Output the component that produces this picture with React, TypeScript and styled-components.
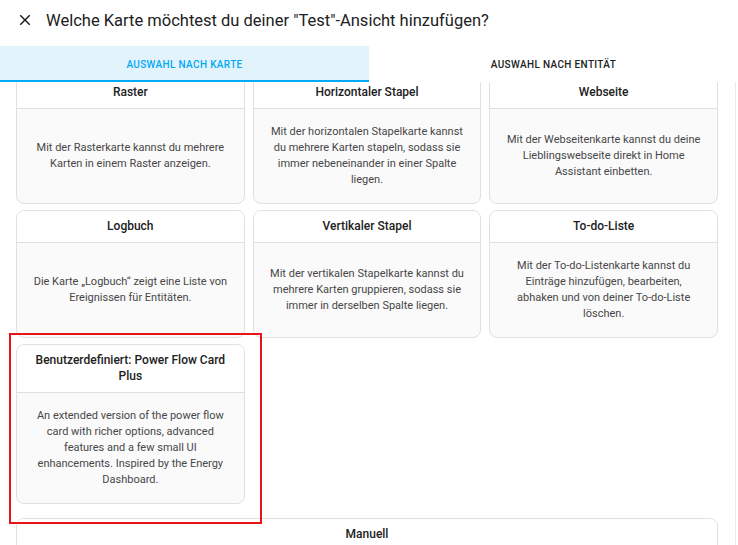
import React from 'react'
import styled, { createGlobalStyle } from 'styled-components'

const GlobalStyle = createGlobalStyle`
  html, body {
    margin: 0;
    padding: 0;
    background: #ffffff;
    font-family: Roboto, 'Noto Sans', sans-serif;
  }
  * {
    box-sizing: border-box;
  }
`

const Dialog = styled.div`
  position: relative;
  width: 738px;
  height: 545px;
  display: flex;
  flex-direction: column;
  overflow: hidden;
  background: #ffffff;
`

const Header = styled.div`
  height: 46px;
  display: flex;
  align-items: center;
  padding: 0 0 6px 16px;
  gap: 12px;
  flex-shrink: 0;
`

const CloseButton = styled.button`
  width: 18px;
  height: 18px;
  padding: 0;
  border: none;
  background: none;
  display: flex;
  align-items: center;
  justify-content: center;
  color: #212121;
`

const Title = styled.h2`
  margin: 0;
  font-size: 16.5px;
  font-weight: 400;
  color: #212121;
`

const Tabs = styled.div`
  display: flex;
  height: 36px;
  flex-shrink: 0;
  position: relative;
  z-index: 1;
  background: #ffffff;
`

const Tab = styled.div<{ $active?: boolean }>`
  flex: 1;
  display: flex;
  align-items: center;
  justify-content: center;
  padding-top: 2px;
  font-size: 10px;
  font-weight: 500;
  letter-spacing: 0.35px;
  text-transform: uppercase;
  color: ${p => (p.$active ? '#03a9f4' : '#212121')};
  background: ${p => (p.$active ? '#e2f3fc' : 'transparent')};
  border-bottom: 2px solid ${p => (p.$active ? '#03a9f4' : 'transparent')};
`

const Body = styled.div`
  flex: 1;
  display: flex;
  min-height: 0;
`

const Scroll = styled.div`
  flex: 1;
  overflow: hidden;
  padding: 0 17px 0 16px;
`

const Gutter = styled.div`
  width: 3px;
  border-left: 1px solid #ebebeb;
`

const Grid = styled.div`
  margin-top: -6px;
  display: grid;
  grid-template-columns: repeat(3, 1fr);
  gap: 6px 8px;
  align-items: stretch;
`

const Card = styled.div`
  display: flex;
  flex-direction: column;
  border: 1px solid #e0e0e0;
  border-radius: 8px;
  overflow: hidden;
  background: #fafafa;
`

const CardTitle = styled.div`
  padding: 7px 16px 8px;
  line-height: 16px;
  font-size: 12px;
  font-weight: 500;
  color: #212121;
  text-align: center;
  background: #ffffff;
  border-bottom: 1px solid #e0e0e0;
`

const CardText = styled.div`
  flex: 1;
  display: flex;
  align-items: center;
  justify-content: center;
  padding: 15px 16px;
  font-size: 11px;
  line-height: 16px;
  color: #474747;
  text-align: center;
`

const ManualCard = styled(Card)`
  margin-top: 14px;
`

const Highlight = styled.div`
  position: absolute;
  left: 9px;
  top: 333px;
  width: 253px;
  height: 191px;
  border: 2px solid #e8141a;
  pointer-events: none;
`

const cards = [
  { title: 'Raster', text: 'Mit der Rasterkarte kannst du mehrere Karten in einem Raster anzeigen.' },
  {
    title: 'Horizontaler Stapel',
    text: 'Mit der horizontalen Stapelkarte kannst du mehrere Karten stapeln, sodass sie immer nebeneinander in einer Spalte liegen.',
  },
  {
    title: 'Webseite',
    text: 'Mit der Webseitenkarte kannst du deine Lieblingswebseite direkt in Home Assistant einbetten.',
  },
  { title: 'Logbuch', text: 'Die Karte „Logbuch“ zeigt eine Liste von Ereignissen für Entitäten.' },
  {
    title: 'Vertikaler Stapel',
    text: 'Mit der vertikalen Stapelkarte kannst du mehrere Karten gruppieren, sodass sie immer in derselben Spalte liegen.',
  },
  {
    title: 'To-do-Liste',
    text: 'Mit der To-do-Listenkarte kannst du Einträge hinzufügen, bearbeiten, abhaken und von deiner To-do-Liste löschen.',
  },
  {
    title: 'Benutzerdefiniert: Power Flow Card Plus',
    text: 'An extended version of the power flow card with richer options, advanced features and a few small UI enhancements. Inspired by the Energy Dashboard.',
  },
]

export default function App() {
  return (
    <>
      <GlobalStyle />
      <Dialog>
        <Header>
          <CloseButton aria-label="Schließen">
            <svg width="18" height="18" viewBox="0 0 24 24">
              <path
                fill="currentColor"
                d="M19,6.41L17.59,5L12,10.59L6.41,5L5,6.41L10.59,12L5,17.59L6.41,19L12,13.41L17.59,19L19,17.59L13.41,12L19,6.41Z"
              />
            </svg>
          </CloseButton>
          <Title>Welche Karte möchtest du deiner "Test"-Ansicht hinzufügen?</Title>
        </Header>
        <Tabs>
          <Tab $active>Auswahl nach Karte</Tab>
          <Tab>Auswahl nach Entität</Tab>
        </Tabs>
        <Body>
          <Scroll>
            <Grid>
              {cards.map(c => (
                <Card key={c.title}>
                  <CardTitle>{c.title}</CardTitle>
                  <CardText>{c.text}</CardText>
                </Card>
              ))}
            </Grid>
            <ManualCard>
              <CardTitle>Manuell</CardTitle>
            </ManualCard>
          </Scroll>
          <Gutter />
        </Body>
        <Highlight />
      </Dialog>
    </>
  )
}
